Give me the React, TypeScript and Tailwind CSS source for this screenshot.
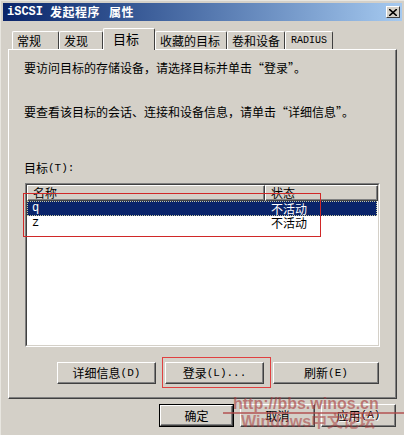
const btn =
  'flex items-center justify-center bg-[#d4d0c8] border border-t-white border-l-white border-r-[#404040] border-b-[#404040] shadow-[inset_-1px_-1px_#808080] text-[12px] leading-none text-black'

const mono = "font-['Liberation_Mono',monospace]"

const tabs = [
  { label: '常规', w: 47 },
  { label: '发现', w: 44 },
  { label: '目标', w: 52, active: true },
  { label: '收藏的目标', w: 72 },
  { label: '卷和设备', w: 58 },
  { label: 'RADIUS', w: 48, latin: true },
]

function CloseIcon() {
  return (
    <svg width="8" height="7" viewBox="0 0 8 7">
      <path d="M0 0l8 7M8 0L0 7" stroke="black" strokeWidth="1.6" />
    </svg>
  )
}

export default function App() {
  return (
    <div className="relative w-[404px] h-[435px] overflow-hidden bg-[#d4d0c8] font-['Noto_Sans_CJK_SC',sans-serif] text-black border-l border-t border-l-[#e8e6e0] border-t-[#e8e6e0]">
      {/* Title bar */}
      <div className="mx-[2px] mt-[2px] h-[18px] flex items-center justify-between bg-gradient-to-r from-[#0a246a] to-[#a6caf0] pl-[4px] pr-[2px]">
        <div className="flex items-center text-white font-bold text-[12px] leading-none">
          <span className={mono}>iSCSI</span>
          <span className="ml-[7px] tracking-[0.5px]">发起程序</span>
          <span className="ml-[9px] tracking-[0.5px]">属性</span>
        </div>
        <div className="w-[14px] h-[12px] flex items-center justify-center bg-[#d4d0c8] border border-t-white border-l-white border-r-[#404040] border-b-[#404040]">
          <CloseIcon />
        </div>
      </div>

      <div className="pl-[7px] pr-[7px]">
        {/* Tabs */}
        <div className="h-[28px] flex items-end pl-[4px]">
          {tabs.map(t =>
            t.active ? (
              <div
                key={t.label}
                style={{ width: t.w }}
                className="relative z-10 -mb-[1px] h-[22px] bg-[#d4d0c8] border-l border-t border-r border-l-white border-t-white border-r-[#404040] rounded-t-[2px] pl-[9px] pt-[2px] text-[13px] leading-[16px]"
              >
                {t.label}
              </div>
            ) : t.latin ? (
              <div
                key={t.label}
                style={{ width: t.w }}
                className={`h-[18px] border-l border-t border-r border-l-white border-t-white border-r-[#404040] rounded-t-[2px] pl-[5px] pt-[2px] text-[10px] leading-[14px] ${mono}`}
              >
                {t.label}
              </div>
            ) : (
              <div
                key={t.label}
                style={{ width: t.w }}
                className="h-[18px] border-l border-t border-r border-l-white border-t-white border-r-[#404040] rounded-t-[2px] pl-[4px] pt-[1px] text-[12px] leading-[16px]"
              >
                {t.label}
              </div>
            ),
          )}
        </div>

        {/* Panel */}
        <div className="h-[350px] border border-t-white border-l-white border-r-[#404040] border-b-[#404040] shadow-[inset_-1px_-1px_#808080] flex flex-col pl-[15px] text-[12px] leading-[16px]">
          <div className="mt-[10px]">要访问目标的存储设备，请选择目标并单击“登录”。</div>
          <div className="mt-[28px]">要查看该目标的会话、连接和设备信息，请单击“详细信息”。</div>
          <div className="mt-[40px] flex items-center">
            目标<span className={`${mono} text-[11px]`}>(T):</span>
          </div>

          {/* List box */}
          <div className="mt-[7px] ml-[1px] w-[355px] h-[164px] bg-white border border-t-[#808080] border-l-[#808080] border-r-white border-b-white">
            <div className="h-full border border-t-[#404040] border-l-[#404040] border-r-[#d4d0c8] border-b-[#d4d0c8] flex flex-col">
              <div className="flex h-[16px]">
                <div className="w-[238px] bg-[#d4d0c8] border border-t-white border-l-white border-r-[#404040] border-b-[#404040] shadow-[inset_-1px_-1px_#808080] pl-[5px] leading-[13px]">
                  名称
                </div>
                <div className="w-[113px] bg-[#d4d0c8] border border-t-white border-l-white border-r-[#404040] border-b-[#404040] shadow-[inset_-1px_-1px_#808080] pl-[5px] leading-[13px]">
                  状态
                </div>
              </div>
              <div className="flex h-[15px] bg-[#0a246a] text-white border border-dotted border-[#c8c8a0] mr-[1px]">
                <div className={`w-[238px] pl-[4px] leading-[13px] ${mono}`}>q</div>
                <div className="pl-[5px] leading-[13px]">不活动</div>
              </div>
              <div className="flex h-[15px]">
                <div className={`w-[238px] pl-[5px] leading-[14px] ${mono}`}>z</div>
                <div className="pl-[6px] leading-[14px]">不活动</div>
              </div>
            </div>
          </div>

          {/* Panel buttons */}
          <div className="mt-[15px] flex">
            <div className={`${btn} ml-[33px] w-[99px] h-[22px]`}>
              详细信息<span className={`${mono} text-[11px]`}>(D)</span>
            </div>
            <div className={`${btn} ml-[9px] w-[99px] h-[22px]`}>
              登录<span className={`${mono} text-[11px]`}>(L)...</span>
            </div>
            <div className={`${btn} ml-[9px] w-[106px] h-[22px]`}>
              刷新<span className={`${mono} text-[11px]`}>(E)</span>
            </div>
          </div>
        </div>

        {/* Dialog buttons */}
        <div className="mt-[5px] flex justify-end gap-[6px] pr-[1px]">
          <div className="w-[75px] h-[23px] border border-black">
            <div className={`${btn} w-full h-full`}>确定</div>
          </div>
          <div className={`${btn} w-[75px] h-[23px]`}>取消</div>
          <div className={`${btn} w-[75px] h-[23px] text-[#808080] [text-shadow:1px_1px_#fff]`}>
            应用<span className={`${mono} text-[11px]`}>(A)</span>
          </div>
        </div>
      </div>

      {/* Red annotation boxes */}
      <div className="absolute left-[22px] top-[192px] w-[298px] h-[44px] border-[1.5px] border-[#d02828] pointer-events-none" />
      <div className="absolute left-[161px] top-[356px] w-[109px] h-[31px] border-[1.5px] border-[#e04040] pointer-events-none" />

      {/* Watermark */}
      <div className="absolute left-[222px] top-[411px] w-[182px] h-[2px] bg-[#b04848]/70 pointer-events-none" />
      <div className="absolute left-[232px] top-[394px] text-[16px] leading-[18px] font-bold text-[#a83a3a]/60 font-['Liberation_Sans',sans-serif] pointer-events-none">
        http://bbs.winos.cn
      </div>
      <div className="absolute left-[240px] top-[412px] text-[16px] leading-[18px] font-bold text-[#a83a3a]/55 font-['Liberation_Sans','Noto_Sans_CJK_SC',sans-serif] pointer-events-none">
        Windows中文论坛
      </div>
    </div>
  )
}
